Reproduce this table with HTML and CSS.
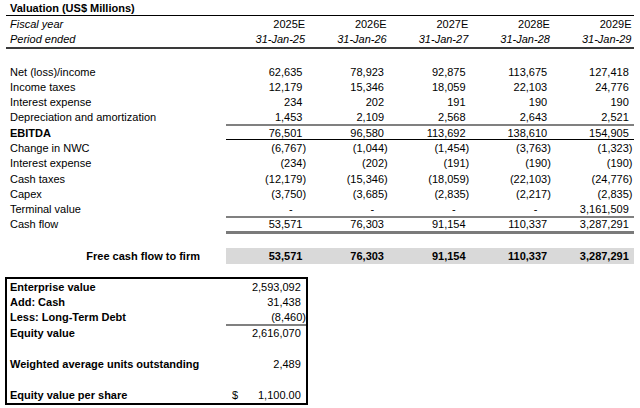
FILE: index.html
```html
<!DOCTYPE html>
<html>
<head>
<meta charset="utf-8">
<title>Valuation</title>
<link rel="stylesheet" href="styles.css">
</head>
<body>
<div class="sheet">
  <div class="title">Valuation (US$ Millions)</div>

  <div class="row">
    <div class="c lbl it">Fiscal year</div>
    <div class="c n hd">2025E</div>
    <div class="c n hd">2026E</div>
    <div class="c n hd">2027E</div>
    <div class="c n hd">2028E</div>
    <div class="c n hd">2029E</div>
  </div>
  <div class="row period">
    <div class="c lbl it">Period ended</div>
    <div class="c n hd it">31-Jan-25</div>
    <div class="c n hd it">31-Jan-26</div>
    <div class="c n hd it">31-Jan-27</div>
    <div class="c n hd it">31-Jan-28</div>
    <div class="c n hd it">31-Jan-29</div>
  </div>
  <div class="row gap15"></div>

  <div class="row r15">
    <div class="c lbl">Net (loss)/income</div>
    <div class="c n">62,635</div>
    <div class="c n">78,923</div>
    <div class="c n">92,875</div>
    <div class="c n">113,675</div>
    <div class="c n">127,418</div>
  </div>
  <div class="row r15">
    <div class="c lbl">Income taxes</div>
    <div class="c n">12,179</div>
    <div class="c n">15,346</div>
    <div class="c n">18,059</div>
    <div class="c n">22,103</div>
    <div class="c n">24,776</div>
  </div>
  <div class="row">
    <div class="c lbl">Interest expense</div>
    <div class="c n">234</div>
    <div class="c n">202</div>
    <div class="c n">191</div>
    <div class="c n">190</div>
    <div class="c n">190</div>
  </div>
  <div class="row u-gray">
    <div class="c lbl">Depreciation and amortization</div>
    <div class="c n">1,453</div>
    <div class="c n">2,109</div>
    <div class="c n">2,568</div>
    <div class="c n">2,643</div>
    <div class="c n">2,521</div>
  </div>
  <div class="row u-black">
    <div class="c lbl b">EBITDA</div>
    <div class="c n">76,501</div>
    <div class="c n">96,580</div>
    <div class="c n">113,692</div>
    <div class="c n">138,610</div>
    <div class="c n">154,905</div>
  </div>
  <div class="row">
    <div class="c lbl">Change in NWC</div>
    <div class="c n neg">(6,767)</div>
    <div class="c n neg">(1,044)</div>
    <div class="c n neg">(1,454)</div>
    <div class="c n neg">(3,763)</div>
    <div class="c n neg">(1,323)</div>
  </div>
  <div class="row">
    <div class="c lbl">Interest expense</div>
    <div class="c n neg">(234)</div>
    <div class="c n neg">(202)</div>
    <div class="c n neg">(191)</div>
    <div class="c n neg">(190)</div>
    <div class="c n neg">(190)</div>
  </div>
  <div class="row">
    <div class="c lbl">Cash taxes</div>
    <div class="c n neg">(12,179)</div>
    <div class="c n neg">(15,346)</div>
    <div class="c n neg">(18,059)</div>
    <div class="c n neg">(22,103)</div>
    <div class="c n neg">(24,776)</div>
  </div>
  <div class="row">
    <div class="c lbl">Capex</div>
    <div class="c n neg">(3,750)</div>
    <div class="c n neg">(3,685)</div>
    <div class="c n neg">(2,835)</div>
    <div class="c n neg">(2,217)</div>
    <div class="c n neg">(2,835)</div>
  </div>
  <div class="row u-gray tv">
    <div class="c lbl">Terminal value</div>
    <div class="c n dash">-</div>
    <div class="c n dash">-</div>
    <div class="c n dash">-</div>
    <div class="c n dash">-</div>
    <div class="c n">3,161,509</div>
  </div>
  <div class="row u-double">
    <div class="c lbl">Cash flow</div>
    <div class="c n">53,571</div>
    <div class="c n">76,303</div>
    <div class="c n">91,154</div>
    <div class="c n">110,337</div>
    <div class="c n">3,287,291</div>
  </div>
  <div class="row gap14"></div>
  <div class="row fcf">
    <div class="c lbl">Free cash flow to firm</div>
    <div class="c n">53,571</div>
    <div class="c n">76,303</div>
    <div class="c n">91,154</div>
    <div class="c n">110,337</div>
    <div class="c n">3,287,291</div>
  </div>

  <div class="box">
    <div class="brow">
      <div class="c lbl b">Enterprise value</div>
      <div class="c n">2,593,092</div>
    </div>
    <div class="brow">
      <div class="c lbl b">Add: Cash</div>
      <div class="c n">31,438</div>
    </div>
    <div class="brow u-gray">
      <div class="c lbl b">Less: Long-Term Debt</div>
      <div class="c n neg0">(8,460)</div>
    </div>
    <div class="brow">
      <div class="c lbl b">Equity value</div>
      <div class="c n">2,616,070</div>
    </div>
    <div class="brow"></div>
    <div class="brow">
      <div class="c lbl b">Weighted average units outstanding</div>
      <div class="c n">2,489</div>
    </div>
    <div class="brow"></div>
    <div class="brow">
      <div class="c lbl b">Equity value per share</div>
      <div class="c n money"><span class="cur">$</span><span>1,100.00</span></div>
    </div>
  </div>
</div>
</body>
</html>
```

FILE: styles.css
```css
* {
  box-sizing: border-box;
}

html,
body {
  margin: 0;
  background: #ffffff;
}

body {
  font-family: "Liberation Sans", Arial, sans-serif;
  font-size: 11px;
  color: #000000;
}

.sheet {
  width: 640px;
  padding: 0 6px;
}

.title {
  width: 628px;
  height: 16px;
  padding-left: 4px;
  border-bottom: 1px solid #000000;
  font-weight: bold;
  display: flex;
  align-items: center;
}

.row {
  display: grid;
  grid-template-columns: 220px repeat(5, 81.6px);
  height: 15.5px;
}

.c {
  display: flex;
  align-items: center;
  white-space: nowrap;
}

.lbl {
  padding-left: 4px;
}

.n {
  justify-content: flex-end;
  padding-right: 5.2px;
}

.n.neg {
  padding-right: 1.5px;
}

.n.neg0 {
  padding-right: 0;
}

.n.hd {
  padding-right: 2.5px;
}

.n.dash {
  padding-right: 15px;
}

.it {
  font-style: italic;
}

.b {
  font-weight: bold;
}

.period {
  height: 17.5px;
}

.period .c {
  border-bottom: 2px solid #3a3a3a;
}

.gap15,
.r15 {
  height: 15px;
}

.gap14 {
  height: 14.5px;
}

.u-gray {
  height: 16.5px;
}

.u-gray .c {
  border-bottom: 2px solid transparent;
}

.u-gray .n {
  border-bottom-color: #808080;
}

.u-gray.tv {
  height: 15.5px;
}

.u-black {
  height: 14px;
}

.u-black .c {
  border-bottom: 1px solid transparent;
}

.u-black .n {
  border-bottom-color: #000000;
}

.u-double {
  height: 16px;
}

.u-double .c {
  border-bottom: 3px solid transparent;
}

.u-double .n {
  border-bottom-color: #7a7a7a;
}

.fcf .lbl {
  justify-content: flex-end;
  padding-right: 26px;
  font-weight: bold;
}

.fcf .n {
  background: #d9d9d9;
  font-weight: bold;
}

.box {
  width: 303px;
  margin-top: 13.5px;
  margin-left: -1px;
  border: 2px solid #000000;
}

.brow {
  display: grid;
  grid-template-columns: 219px 80px;
  height: 15.5px;
}

.brow .lbl {
  padding-left: 3px;
}

.brow.u-gray {
  height: 15.5px;
}

.money {
  justify-content: space-between;
  padding-left: 6px;
}
```
